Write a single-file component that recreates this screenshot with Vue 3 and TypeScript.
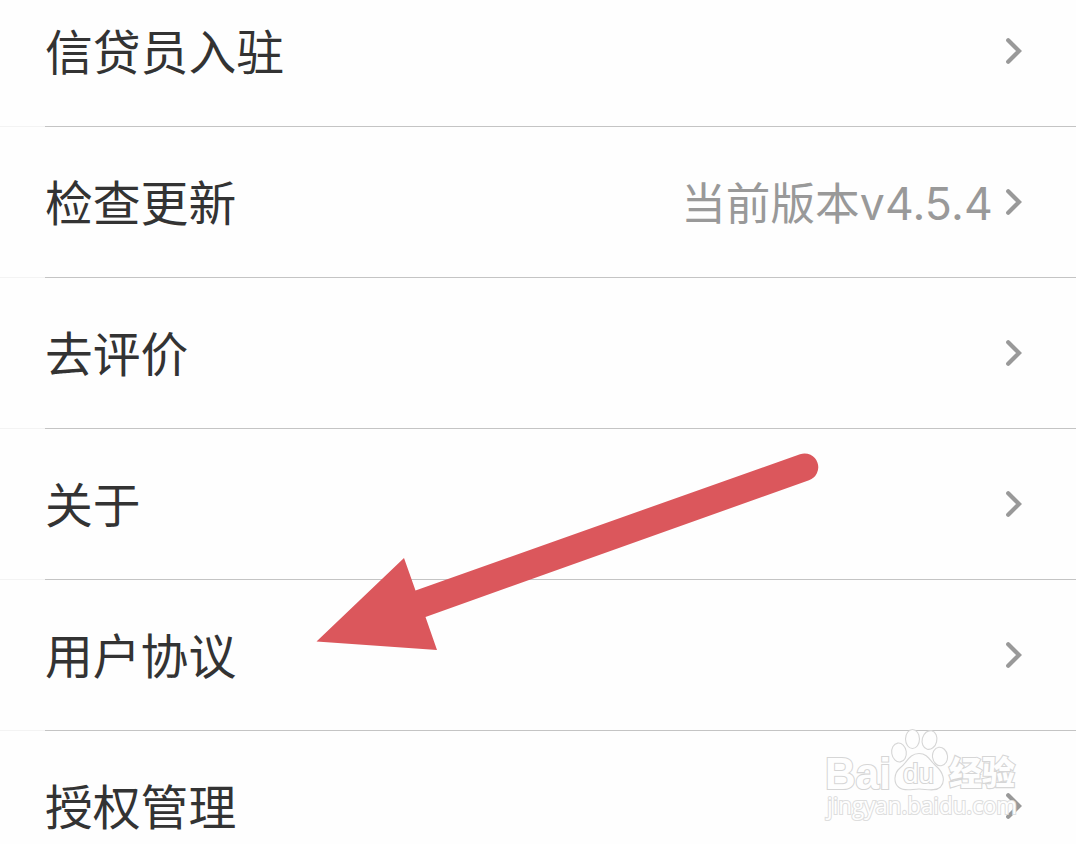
<script setup lang="ts">
interface SettingItem {
  label: string;
  value?: string;
  version?: string;
}

const items: SettingItem[] = [
  { label: "信贷员入驻" },
  { label: "检查更新", value: "当前版本", version: "v4.5.4" },
  { label: "去评价" },
  { label: "关于" },
  { label: "用户协议" },
  { label: "授权管理" },
];
</script>

<template>
  <main class="settings">
    <ul class="list">
      <li v-for="item in items" :key="item.label" class="item">
        <span class="label">{{ item.label }}</span>
        <span v-if="item.value" class="value">
          {{ item.value }}<span class="version">{{ item.version }}</span>
        </span>
        <svg class="chevron" width="20" height="30" viewBox="0 0 20 30">
          <path d="M4.2 4.2 L15 15 L4.2 25.8" />
        </svg>
      </li>
    </ul>

    <svg class="arrow" width="520" height="220" viewBox="310 440 520 220">
      <path
        d="M316.5 641.5 L404 558 L415.5 590.5 L800 454.2 A13.7 13.7 0 0 1 809 480.2 L425.5 617 L437 650 Z"
      />
    </svg>

    <svg class="watermark" width="210" height="100" viewBox="815 725 210 100">
      <text class="brand" x="825" y="788.5" textLength="66" lengthAdjust="spacingAndGlyphs">Bai</text>
      <g class="paw">
        <ellipse cx="899" cy="752.5" rx="7.3" ry="9.5" transform="rotate(-8 899 752.5)" />
        <ellipse cx="912.5" cy="739" rx="7" ry="9.5" />
        <ellipse cx="929.5" cy="740" rx="7.3" ry="9.5" transform="rotate(14 929.5 740)" />
        <ellipse cx="940" cy="756.5" rx="7.5" ry="9.3" transform="rotate(-8 940 756.5)" />
        <path
          d="M919 753.5 C909 753.5 907 763 900 768 C894 773 893 783 899 787.5 C905 792 912 789 919 789 C926 789 935 792 940.5 787 C946 781 943 772 936 766 C930 761 928 753.5 919 753.5 Z"
        />
      </g>
      <text class="du" x="903" y="783" textLength="31" lengthAdjust="spacingAndGlyphs">du</text>
      <text class="brand-cn" x="949" y="785" textLength="66" lengthAdjust="spacingAndGlyphs">经验</text>
      <text class="site" x="827" y="814" textLength="190" lengthAdjust="spacingAndGlyphs">jingyan.baidu.com</text>
    </svg>
  </main>
</template>

<style>
body {
  margin: 0;
  background: #fefefe;
}
</style>

<style scoped>
.settings {
  position: relative;
  height: 844px;
  overflow: hidden;
  background: #fefefe;
  font-family: "Noto Sans CJK SC", sans-serif;
}

/* The list is scrolled, so the first row is cut at the top. */
.list {
  margin: -24px 0 0;
  padding: 0;
  list-style: none;
}

.item {
  display: flex;
  align-items: center;
  box-sizing: border-box;
  height: 151px;
  padding: 0 52px 2px 45px;
  background:
    linear-gradient(#c4c4c4, #c4c4c4) 45px 100% / 100% 1px no-repeat,
    linear-gradient(#f3f3f3, #f3f3f3) 0 100% / 45px 1px no-repeat;
}

.label {
  flex: 1;
  padding-bottom: 2px;
  color: #333;
  font-size: 47.8px;
  line-height: 70px;
}

.value {
  margin-right: 11px;
  padding-top: 2px;
  color: #999;
  font-size: 44.6px;
  line-height: 66px;
  white-space: nowrap;
}

.version {
  font-family: Inter, sans-serif;
  letter-spacing: 0.2px;
}

.chevron {
  flex-shrink: 0;
}
.chevron path {
  fill: none;
  stroke: #999;
  stroke-width: 4.2;
  stroke-linecap: round;
  stroke-linejoin: miter;
}

.arrow {
  position: absolute;
  left: 310px;
  top: 440px;
  fill: #db575c;
}

.watermark {
  position: absolute;
  left: 815px;
  top: 725px;
  fill: #fefefe;
  stroke: #d6d6d6;
  stroke-width: 1.1;
}
.watermark text {
  paint-order: stroke;
  stroke-width: 2.2;
}
.brand {
  font: bold 44px "Liberation Sans", sans-serif;
}
.du {
  font: 28px "Liberation Sans", sans-serif;
}
.brand-cn {
  font: 900 33px "Noto Sans CJK SC", sans-serif;
}
.site {
  font: 23px "Open Sans", sans-serif;
}
.watermark .site {
  stroke: #dedede;
}
</style>
